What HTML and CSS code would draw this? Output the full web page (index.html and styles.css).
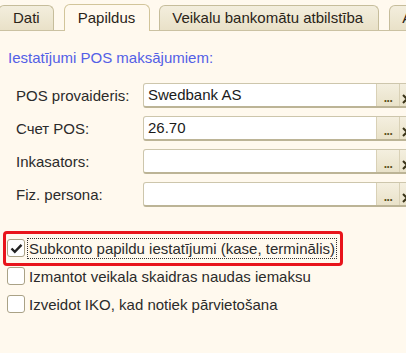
FILE: index.html
```html
<!DOCTYPE html>
<html lang="lv">
<head>
    <meta charset="UTF-8" />
    <title>Papildus</title>
    <link rel="stylesheet" href="styles.css">
</head>
<body>
<div class="tabs">
    <div class="tab first">Dati</div>
    <div class="tab active">Papildus</div>
    <div class="tab wide">Veikalu bankomātu atbilstība</div>
    <div class="tab">Atlaides</div>
</div>

<div class="panel">
    <div class="section-title">Iestatījumi POS maksājumiem:</div>

    <div class="form">
        <div class="row">
            <div class="label">POS provaideris:</div>
            <div class="field">
                <span class="value">Swedbank AS</span>
                <span class="btn dots">...</span>
                <span class="btn clear"><svg width="10" height="10" viewBox="0 0 10 10"><path d="M1 1L9 9M9 1L1 9" stroke="#3a3418" stroke-width="2"/></svg></span>
            </div>
        </div>
        <div class="row">
            <div class="label">Счет POS:</div>
            <div class="field">
                <span class="value">26.70</span>
                <span class="btn dots">...</span>
                <span class="btn clear"><svg width="10" height="10" viewBox="0 0 10 10"><path d="M1 1L9 9M9 1L1 9" stroke="#3a3418" stroke-width="2"/></svg></span>
            </div>
        </div>
        <div class="row">
            <div class="label">Inkasators:</div>
            <div class="field">
                <span class="value"></span>
                <span class="btn dots">...</span>
                <span class="btn clear"><svg width="10" height="10" viewBox="0 0 10 10"><path d="M1 1L9 9M9 1L1 9" stroke="#3a3418" stroke-width="2"/></svg></span>
            </div>
        </div>
        <div class="row">
            <div class="label">Fiz. persona:</div>
            <div class="field">
                <span class="value"></span>
                <span class="btn dots">...</span>
                <span class="btn clear"><svg width="10" height="10" viewBox="0 0 10 10"><path d="M1 1L9 9M9 1L1 9" stroke="#3a3418" stroke-width="2"/></svg></span>
            </div>
        </div>
    </div>

    <div class="checks">
        <div class="check marked">
            <span class="box"><svg width="13" height="11" viewBox="0 0 13 11"><path d="M1.5 5.5L4.8 8.8L11.5 1.8" fill="none" stroke="#222" stroke-width="2.4"/></svg></span>
            <span class="text focus">Subkonto papildu iestatījumi (kase, terminālis)</span>
        </div>
        <div class="check">
            <span class="box"></span>
            <span class="text">Izmantot veikala skaidras naudas iemaksu</span>
        </div>
        <div class="check">
            <span class="box"></span>
            <span class="text">Izveidot IKO, kad notiek pārvietošana</span>
        </div>
    </div>
</div>
</body>
</html>
```

FILE: styles.css
```css
body {
  margin: 0;
  width: 406px;
  height: 353px;
  overflow: hidden;
  background: #fff9ee;
  font-family: "Liberation Sans", Arial, sans-serif;
  font-size: 15px;
  color: #2b2b2b;
}
.tabs {
  display: flex;
  align-items: flex-end;
  height: 30px;
  border-bottom: 1px solid #cbc2a2;
  white-space: nowrap;
}
.tab {
  box-sizing: border-box;
  height: 25px;
  padding: 3px 13px 0 12px;
  margin-right: 10px;
  border: 1px solid #c6bd9b;
  border-bottom: none;
  border-radius: 6px 6px 0 0;
  background: linear-gradient(#f3eedd, #e9e1c8);
  color: #2a2418;
  line-height: 18px;
  flex-shrink: 0;
}
.tab.first {
  margin-left: -2px;
  padding-left: 14px;
}
.tab.active {
  height: 27px;
  margin-bottom: -1px;
  margin-right: 9px;
  padding: 4px 14px 0 13px;
  background: #fff9ee;
  border-color: #d2c59a;
}
.tab.wide {
  padding-right: 15px;
}
.section-title {
  margin: 18px 0 0 8px;
  line-height: 17px;
  color: #5360e6;
}
.form {
  display: flex;
  flex-direction: column;
  gap: 7px;
  margin-top: 16px;
}
.row {
  display: flex;
  align-items: center;
  height: 26px;
}
.label {
  width: 127px;
  padding-left: 16px;
  flex-shrink: 0;
}
.field {
  box-sizing: border-box;
  display: flex;
  width: 290px;
  height: 25px;
  flex-shrink: 0;
  background: #fff;
  border: 1px solid #cdc6ac;
  border-bottom: 2px solid #bcb496;
  border-radius: 3px;
  overflow: hidden;
}
.value {
  width: 228px;
  flex-shrink: 0;
  padding-left: 4px;
  line-height: 22px;
  color: #1a1a1a;
}
.btn {
  width: 22px;
  flex-shrink: 0;
  background: linear-gradient(#f4efdf, #e9e2c9);
  border-left: 1px solid #d9d1b6;
}
.dots {
  font-weight: bold;
  font-size: 12px;
  letter-spacing: -0.5px;
  line-height: 28px;
  text-align: center;
  color: #5a5020;
}
.clear {
  padding: 6px 0 0 2px;
  box-sizing: border-box;
  width: 40px;
}
.checks {
  margin-top: 27px;
}
.check {
  position: relative;
  display: flex;
  align-items: center;
  height: 28px;
  padding-left: 7px;
}
.box {
  box-sizing: border-box;
  width: 18px;
  height: 18px;
  flex-shrink: 0;
  border: 1px solid #aaa286;
  border-radius: 3px;
  background: #fff;
  display: flex;
  align-items: center;
  justify-content: center;
}
.text {
  margin-left: 2px;
  padding: 0 1px;
  line-height: 19px;
  border: 1px solid transparent;
  white-space: nowrap;
}
.text.focus {
  border: 1px dotted #333;
}
.check.marked::after {
  content: "";
  position: absolute;
  left: 3px;
  top: -3px;
  bottom: -4px;
  width: 340px;
  box-sizing: border-box;
  border: 3px solid #e8141b;
  border-radius: 4px;
}
```
